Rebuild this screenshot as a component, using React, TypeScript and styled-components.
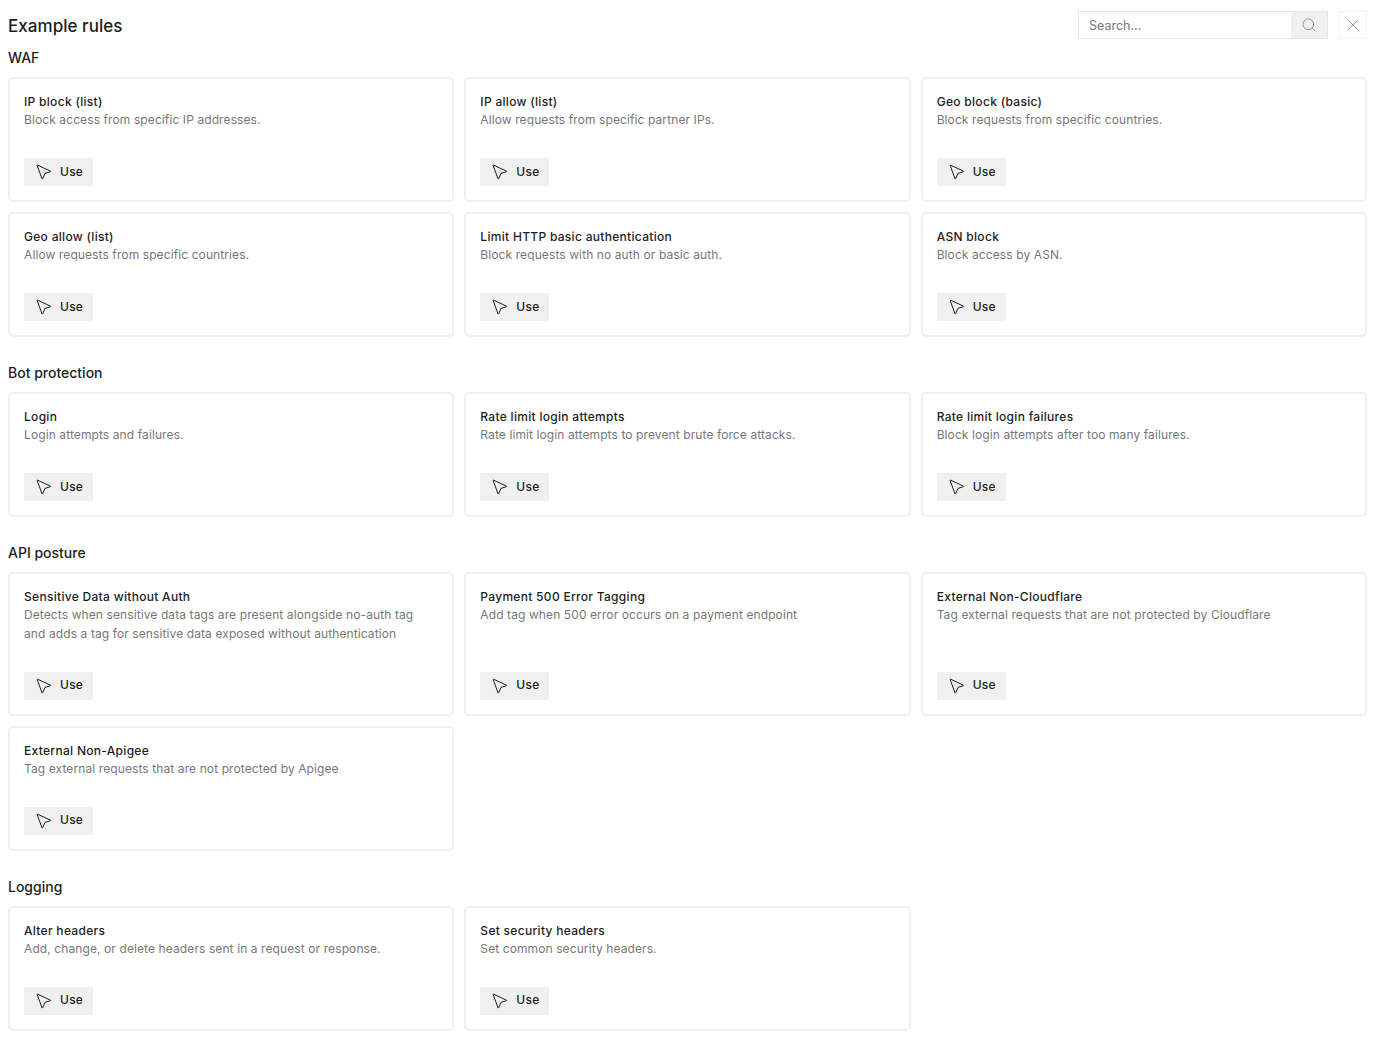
import styled, { createGlobalStyle } from "styled-components";
import { Search, X } from "lucide-react";

const GlobalStyle = createGlobalStyle`
  html, body {
    margin: 0;
    background: #ffffff;
    font-family: Inter, "Liberation Sans", sans-serif;
    color: #1d1d1d;
  }
`;

type Rule = { title: string; description: string };
type Section = { name: string; rules: Rule[] };

const sections: Section[] = [
  {
    name: "WAF",
    rules: [
      { title: "IP block (list)", description: "Block access from specific IP addresses." },
      { title: "IP allow (list)", description: "Allow requests from specific partner IPs." },
      { title: "Geo block (basic)", description: "Block requests from specific countries." },
      { title: "Geo allow (list)", description: "Allow requests from specific countries." },
      { title: "Limit HTTP basic authentication", description: "Block requests with no auth or basic auth." },
      { title: "ASN block", description: "Block access by ASN." },
    ],
  },
  {
    name: "Bot protection",
    rules: [
      { title: "Login", description: "Login attempts and failures." },
      { title: "Rate limit login attempts", description: "Rate limit login attempts to prevent brute force attacks." },
      { title: "Rate limit login failures", description: "Block login attempts after too many failures." },
    ],
  },
  {
    name: "API posture",
    rules: [
      {
        title: "Sensitive Data without Auth",
        description:
          "Detects when sensitive data tags are present alongside no-auth tag and adds a tag for sensitive data exposed without authentication",
      },
      { title: "Payment 500 Error Tagging", description: "Add tag when 500 error occurs on a payment endpoint" },
      { title: "External Non-Cloudflare", description: "Tag external requests that are not protected by Cloudflare" },
      { title: "External Non-Apigee", description: "Tag external requests that are not protected by Apigee" },
    ],
  },
  {
    name: "Logging",
    rules: [
      { title: "Alter headers", description: "Add, change, or delete headers sent in a request or response." },
      { title: "Set security headers", description: "Set common security headers." },
    ],
  },
];

const CursorIcon = () => (
  <svg width="16" height="16" viewBox="0 0 16 16" fill="none" stroke="#1d1d1d" strokeWidth="1" strokeLinejoin="round">
    <path d="M1.2 1.6 Q0.9 1 1.6 1.2 L14.4 7.1 Q15 7.5 14.4 7.7 L9 9.4 L6.6 14.8 Q6.3 15.4 6 14.8 Z" />
  </svg>
);

const RuleCard = ({ rule }: { rule: Rule }) => (
  <Card>
    <CardText>
      <CardTitle>{rule.title}</CardTitle>
      <CardDescription>{rule.description}</CardDescription>
    </CardText>
    <UseButton>
      <CursorIcon />
      <UseLabel>Use</UseLabel>
    </UseButton>
  </Card>
);

export default function App() {
  return (
    <Page>
      <GlobalStyle />
      <Header>
        <Title>Example rules</Title>
        <Tools>
          <SearchBox>
            <SearchInput placeholder="Search..." />
            <SearchButton>
              <Search size={16} strokeWidth={1} color="#666" />
            </SearchButton>
          </SearchBox>
          <CloseButton>
            <X size={20} strokeWidth={1} color="#888" />
          </CloseButton>
        </Tools>
      </Header>
      {sections.map((section) => (
        <SectionBlock key={section.name}>
          <SectionTitle>{section.name}</SectionTitle>
          <CardGrid>
            {section.rules.map((rule) => (
              <RuleCard key={rule.title} rule={rule} />
            ))}
          </CardGrid>
        </SectionBlock>
      ))}
    </Page>
  );
}

const Page = styled.div`
  box-sizing: border-box;
  width: 1378px;
  height: 1041px;
  overflow: hidden;
  padding: 11px 11px 0 8px;
`;

const Header = styled.header`
  display: flex;
  align-items: flex-start;
  justify-content: space-between;
  height: 30px;
  margin-bottom: 8px;
`;

const Title = styled.h1`
  margin: 0;
  font-size: 17px;
  line-height: 30px;
  font-weight: 500;
  letter-spacing: 0.04px;
  color: #1d1d1d;
`;

const Tools = styled.div`
  display: flex;
  align-items: center;
  gap: 11px;
`;

const SearchBox = styled.div`
  display: flex;
  width: 250px;
  height: 28px;
  box-sizing: border-box;
  border: 1px solid #e5e5e5;
`;

const SearchInput = styled.input`
  flex: 1;
  min-width: 0;
  border: 0;
  outline: 0;
  padding: 0 10px;
  font-family: inherit;
  font-size: 12.5px;
  background: transparent;

  &::placeholder {
    color: #777;
    opacity: 1;
  }
`;

const SearchButton = styled.div`
  width: 36px;
  display: flex;
  align-items: center;
  justify-content: center;
  background: #f0f0f0;
`;

const CloseButton = styled.div`
  width: 28px;
  height: 28px;
  box-sizing: border-box;
  border: 1px solid #f2f2f2;
  display: flex;
  align-items: center;
  justify-content: center;
`;

const SectionBlock = styled.section`
  margin-bottom: 27px;
`;

const SectionTitle = styled.h2`
  margin: 0 0 10px;
  font-size: 14px;
  line-height: 18px;
  font-weight: 500;
  color: #1d1d1d;
`;

const CardGrid = styled.div`
  display: grid;
  grid-template-columns: repeat(3, 1fr);
  column-gap: 10px;
  row-gap: 10px;
`;

const Card = styled.article`
  box-sizing: border-box;
  padding: 14px 18px 14px 14px;
  border: 2px solid #f0f0f0;
  border-radius: 5px;
  display: flex;
  flex-direction: column;
  justify-content: space-between;
  align-items: flex-start;
`;

const CardText = styled.div`
  display: flex;
  flex-direction: column;
  margin-bottom: 28.25px;
`;

const CardTitle = styled.div`
  font-size: 12px;
  line-height: 18px;
  font-weight: 500;
  letter-spacing: 0.3px;
  color: #1d1d1d;
`;

const CardDescription = styled.div`
  font-size: 12px;
  line-height: 18.75px;
  color: #777;
  letter-spacing: 0.1px;
`;

const UseButton = styled.button`
  display: flex;
  align-items: center;
  gap: 8px;
  height: 28px;
  padding: 0 10px 0 12px;
  border: 0;
  background: #f0f0f0;
  font-family: inherit;
  font-size: 12px;
  font-weight: 500;
  letter-spacing: 0.25px;
  color: #1d1d1d;
`;

const UseLabel = styled.span`
  padding-bottom: 2px;
`;
